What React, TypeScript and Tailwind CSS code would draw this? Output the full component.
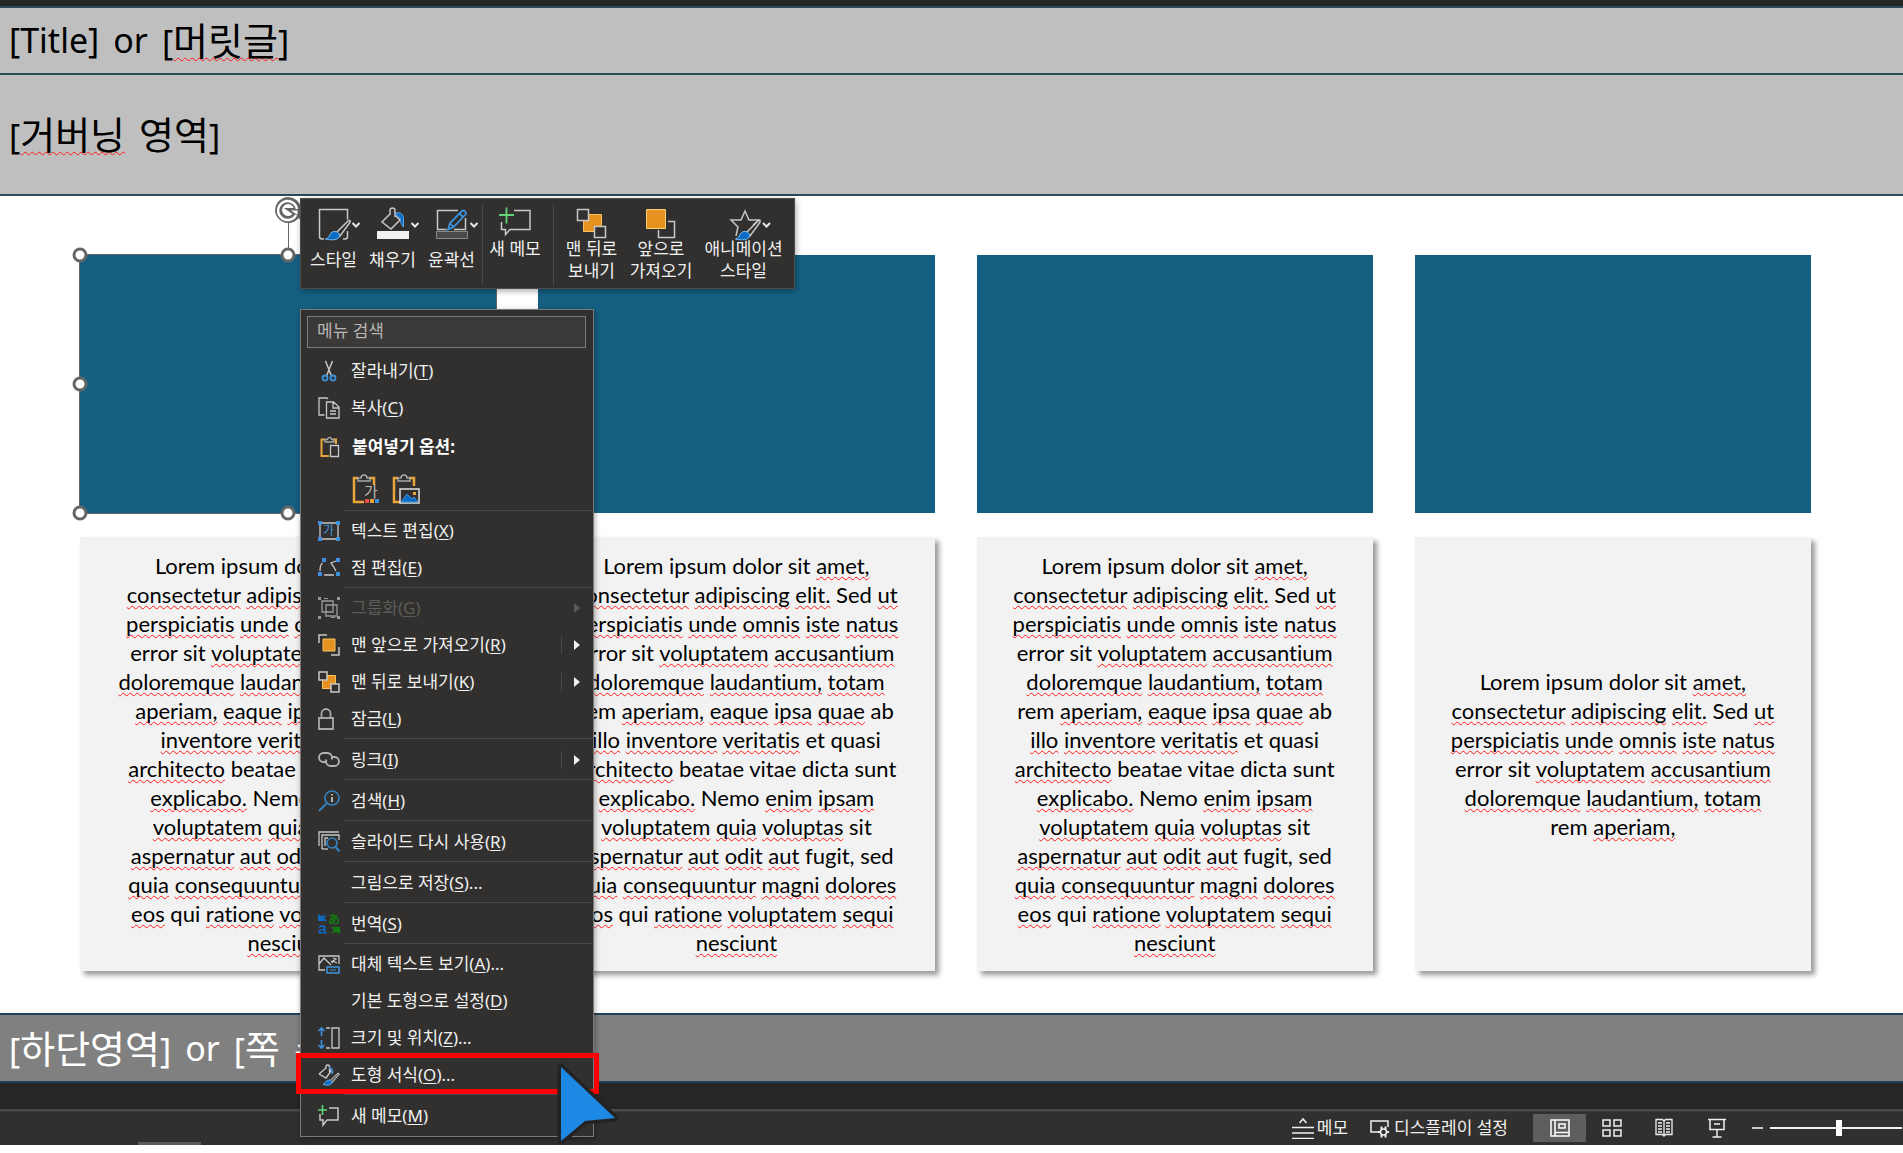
import React from 'react';

const SHAPE_COUNT = 4;

const FULL_LINES = [
  'Lorem ipsum dolor sit *amet,',
  '*consectetur *adipiscing *elit. Sed *ut',
  '*perspiciatis *unde *omnis *iste *natus',
  'error sit *voluptatem *accusantium',
  '*doloremque *laudantium, *totam',
  'rem *aperiam, *eaque *ipsa *quae ab',
  '*illo *inventore *veritatis et quasi',
  '*architecto beatae vitae dicta sunt',
  '*explicabo. Nemo *enim *ipsam',
  '*voluptatem *quia *voluptas sit',
  '*aspernatur *aut *odit *aut fugit, sed',
  '*quia *consequuntur *magni *dolores',
  '*eos qui *ratione *voluptatem *sequi',
  '*nesciunt',
];

const WIDE_LINES = [
  ...FULL_LINES.slice(0, 4),
  '*doloremque *laudantium, *totam rem',
  '*aperiam, *eaque *ipsa *quae ab *illo',
  '*inventore *veritatis et quasi',
  ...FULL_LINES.slice(7),
];

const CARDS = [WIDE_LINES, FULL_LINES, FULL_LINES, [...FULL_LINES.slice(0, 5), 'rem *aperiam,']];

const Misspelt: React.FC<{ children: React.ReactNode }> = ({ children }) => (
  <span className="underline decoration-wavy decoration-[#ff1a1a] decoration-1 underline-offset-2 [text-decoration-skip-ink:none]">
    {children}
  </span>
);

const TextCard: React.FC<{ lines: string[] }> = ({ lines }) => (
  <div className="flex flex-col justify-center bg-[#f2f2f2] py-[14px] text-center font-['Lato',sans-serif] text-[22px] leading-[29px] text-black shadow-[4px_4px_5px_rgba(0,0,0,0.4)] [font-variant-ligatures:none]">
    {lines.map((line, i) => (
      <p key={i} className="whitespace-nowrap">
        {line.split(' ').map((word, j) => (
          <React.Fragment key={j}>
            {j > 0 && ' '}
            {word.startsWith('*') ? <Misspelt>{word.slice(1)}</Misspelt> : word}
          </React.Fragment>
        ))}
      </p>
    ))}
  </div>
);

const Handle: React.FC<{ className: string }> = ({ className }) => (
  <span className={`absolute size-[15px] -translate-x-1/2 -translate-y-1/2 rounded-full border-[3px] border-[#666] bg-white ${className}`} />
);

const Selection: React.FC = () => (
  <div className="absolute -inset-px border border-[#666]">
    <span className="absolute -top-8 left-1/2 h-8 w-px bg-[#666]" />
    <svg viewBox="0 0 28 28" className="absolute -top-[59px] left-1/2 size-7 -translate-x-1/2" fill="none">
      <path d="M22.5 18.5a9.5 9.5 0 1 1 1-6" stroke="#666" strokeWidth="7" />
      <path d="M13 13h13v9z" fill="#666" stroke="#666" strokeWidth="2" />
      <path d="M22 19a9.5 9.5 0 1 1 1-6" stroke="#fff" strokeWidth="2.5" />
      <path d="M17 14.500h6.500v4.500z" fill="#fff" />
    </svg>
    <Handle className="left-0 top-0" />
    <Handle className="left-1/2 top-0" />
    <Handle className="left-0 top-1/2" />
    <Handle className="left-0 top-full" />
    <Handle className="left-1/2 top-full" />
  </div>
);

/* ---------- Mini toolbar ---------- */

const Chevron = <path d="M48.500 18l3.500 3.500L55.500 18" stroke="#e8e8e8" strokeWidth="2" />;

const Brush: React.FC<{ transform?: string }> = ({ transform }) => (
  <g transform={transform}>
    <path d="M44 16c2-1.500 3 0 1.500 2L36 31l-4-3z" fill="#31302e" stroke="#c8c8c8" strokeWidth="1.500" />
    <path d="M31 26.500c4 .5 6 4 3.500 6.500-3 2.500-9 2-13 1 3-1 3.500-2.500 4.500-4.500 1-2 3-3.500 5-3z" fill="#0a6cc4" stroke="#7dbcf0" strokeWidth="1" />
  </g>
);

const ToolSvg: React.FC<{ w: string; box: string; children: React.ReactNode }> = ({ w, box, children }) => (
  <svg viewBox={box} className={`h-[33px] overflow-visible ${w}`} fill="none" aria-hidden="true">
    {children}
  </svg>
);

const ToolButton: React.FC<{ width: string; icon: React.ReactNode; lines: string[]; low?: boolean }> = ({ width, icon, lines, low }) => (
  <button type="button" className={`flex flex-col items-center ${width}`}>
    {icon}
    <span className={`whitespace-nowrap leading-[22px] ${low ? 'mt-[11px]' : ''}`}>
      {lines.map((l) => (
        <span key={l} className="block">{l}</span>
      ))}
    </span>
  </button>
);

const MiniToolbar: React.FC = () => (
  <div
    role="toolbar"
    className="absolute left-[300px] top-[198px] flex h-[91px] border border-[#4e4c4a] bg-[#31302e] px-[3px] pt-[6px] text-[17px] text-[#f0f0f0] shadow-[1px_2px_6px_rgba(0,0,0,0.35)]"
  >
    <ToolButton
      width="w-[59px]"
      low
      lines={['스타일']}
      icon={
        <ToolSvg w="w-[59px]" box="0 0 59 33">
          <path d="M20 34h-2a2.500 2.500 0 0 1-2.500-2.500V4.500h28v10M43.500 26v5.500a2.500 2.500 0 0 1-2.500 2.500h-2" stroke="#c8c8c8" strokeWidth="1.500" />
          <Brush />
          {Chevron}
        </ToolSvg>
      }
    />
    <ToolButton
      width="w-[59px]"
      low
      lines={['채우기']}
      icon={
        <ToolSvg w="w-[59px]" box="0 0 59 33">
          <path d="M27 10V5.500a2.500 2.500 0 0 1 5 0V12M27 9l-8 8 9 7 9-9-5-5" stroke="#c8c8c8" strokeWidth="1.500" />
          <path d="M33 8c5-1 7.500 1.500 7.500 6v8c-3-3-3-6-3-8-1-3-3-3-4.500-3z" fill="#0a6cc4" stroke="#5aa8e8" />
          <path d="M14 26h32v8H14z" fill="#f2f2f2" />
          {Chevron}
        </ToolSvg>
      }
    />
    <ToolButton
      width="w-[59px]"
      low
      lines={['윤곽선']}
      icon={
        <ToolSvg w="w-[59px]" box="0 0 59 33">
          <path d="M36 5.500H15.500v19h9M43.500 13v11.500H32" stroke="#c8c8c8" strokeWidth="1.500" />
          <path d="M26 24.500l2-6.500L40 6c2-1.500 5 1.500 3.500 3.500L31.500 22l-5.500 2.500zM28 18l3.500 4M37.500 8.500l4 4" stroke="#3c92dc" strokeWidth="1.800" />
          <path d="M14.500 26.500h31v7h-31z" fill="#4a4a4a" stroke="#8a8a8a" />
          {Chevron}
        </ToolSvg>
      }
    />
    <span className="ml-px h-[80px] w-px bg-[#4a4a48]" />
    <ToolButton
      width="w-[70px] pr-[6px]"
      lines={['새 메모']}
      icon={
        <ToolSvg w="w-[65px]" box="0 0 65 33">
          <path d="M31 5.500h16v19H27l-4.500 5v-5h-4V17" stroke="#c8c8c8" strokeWidth="1.500" />
          <path d="M23.500 2.500v16M16 10h15" stroke="#5fd37a" strokeWidth="1.800" />
        </ToolSvg>
      }
    />
    <span className="mr-[3px] h-[80px] w-px bg-[#4a4a48]" />
    <ToolButton
      width="w-[69px]"
      lines={['맨 뒤로', '보내기']}
      icon={
        <ToolSvg w="w-[69px]" box="0 0 69 33">
          <path d="M26.500 9.500h18v17h-18z" fill="#e69220" stroke="#f7c264" />
          <path d="M20.500 4.500h11v11h-11zM37.500 21.500h11v11h-11z" fill="#31302e" stroke="#c8c8c8" strokeWidth="1.500" />
        </ToolSvg>
      }
    />
    <ToolButton
      width="w-[70px]"
      lines={['앞으로', '가져오기']}
      icon={
        <ToolSvg w="w-[70px]" box="0 0 70 33">
          <path d="M42 16.500h6.500v16h-16V25" stroke="#c8c8c8" strokeWidth="1.500" />
          <path d="M20.500 4.500h19v19h-19z" fill="#e69220" stroke="#f9cf7c" />
        </ToolSvg>
      }
    />
    <ToolButton
      width="w-[95px]"
      lines={['애니메이션', '스타일']}
      icon={
        <ToolSvg w="w-[95px]" box="0 0 95 33">
          <path d="M40 31l2-9-7-7h10l4-9 4 9h10l-6 5" stroke="#c8c8c8" strokeWidth="1.500" />
          <Brush transform="translate(18 0)" />
          <path d="M67 18l3.500 3.500L74 18" stroke="#e8e8e8" strokeWidth="2" />
        </ToolSvg>
      }
    />
  </div>
);

/* ---------- Context menu ---------- */

const ICONS: Record<string, React.ReactNode> = {
  cut: (
    <>
      <path d="M7.500 1l6 15M14.500 1l-6 15" stroke="#c8c8c8" strokeWidth="1.500" />
      <circle cx="7" cy="18" r="2.500" stroke="#3c92dc" strokeWidth="1.800" />
      <circle cx="15" cy="18" r="2.500" stroke="#3c92dc" strokeWidth="1.800" />
    </>
  ),
  copy: (
    <path d="M6.500 18H1V1h8l1 1M8.500 5h7l5.500 5v11H8.500zM15 5v6h6M12 14h6M12 17h6" stroke="#c8c8c8" strokeWidth="1.300" />
  ),
  paste: (
    <>
      <path d="M7 3.500H3.500V20H11M15 3.500h3V8" stroke="#e9a53c" strokeWidth="2" />
      <path d="M7 6V3.500h2.500a2 2 0 0 1 4 0H16V6z" stroke="#a8a8a8" strokeWidth="1.300" />
      <path d="M12.500 9.500h8v11h-8z" fill="#31302e" stroke="#c8c8c8" strokeWidth="1.300" />
    </>
  ),
  editText: (
    <>
      <path d="M2 3h18v16H2z" stroke="#c8c8c8" strokeWidth="1.300" />
      <path d="M0 1h4v4H0zM18 1h4v4h-4zM0 17h4v4H0zM18 17h4v4h-4z" fill="#3c92dc" />
      <text x="5" y="15" fontSize="12" fill="#3c92dc" fontFamily="Noto Sans CJK KR">가</text>
    </>
  ),
  editPoints: (
    <>
      <path d="M2 14c0-4 1-7 2.500-8M18 4l-5 2 2.500 3.500L18 14M6 18h10" stroke="#c8c8c8" strokeWidth="1.300" />
      <path d="M4 1h4v4H4zM18 1h4v4h-4zM0 15h4v4H0zM18 15h4v4h-4z" fill="#3c92dc" />
    </>
  ),
  group: (
    <>
      <path d="M4 4h11v11H4zM8 8h11v11H8z" stroke="#9a9a9a" strokeWidth="1.300" />
      <path d="M0 0h3v3H0zM19 0h3v3h-3zM0 19h3v3H0zM19 19h3v3h-3zM6 1h4v1H6zM13 20h4v1h-4z" fill="#9a9a9a" />
    </>
  ),
  front: (
    <>
      <path d="M1 9V1h8M21 13v8h-8" stroke="#c8c8c8" strokeWidth="1.500" />
      <path d="M5 5h12v12H5z" fill="#e69220" stroke="#f7c264" />
    </>
  ),
  back: (
    <>
      <path d="M4.500 4.500h13v13h-13z" fill="#e69220" stroke="#f7c264" />
      <path d="M1 1h8v8H1zM13 13h8v8h-8z" fill="#31302e" stroke="#c8c8c8" strokeWidth="1.500" />
    </>
  ),
  lock: <path d="M1 10h14v11H1zM3.500 10V5.500a4.500 4.500 0 0 1 9 0V10" stroke="#a8a8a8" strokeWidth="1.800" />,
  link: (
    <path d="M8 13H5.500a4.500 4.500 0 0 1 0-9h4a4.500 4.500 0 0 1 4 6.500M14 8h2.500a4.500 4.500 0 0 1 0 9h-4a4.500 4.500 0 0 1-4-6.500" stroke="#b4b4b4" strokeWidth="1.800" />
  ),
  search: (
    <>
      <circle cx="14" cy="8" r="7" stroke="#3584c4" strokeWidth="1.600" />
      <path d="M9 13l-8 8" stroke="#3584c4" strokeWidth="1.800" />
      <path d="M14 4v1.500M14 7v5" stroke="#e0e0e0" strokeWidth="1.500" />
    </>
  ),
  reuse: (
    <>
      <path d="M1 15V1h20M4 18V4h17v5M7 15V7h3" stroke="#c8c8c8" strokeWidth="1.300" />
      <path d="M4 18h6" stroke="#c8c8c8" strokeWidth="1.300" />
      <circle cx="14" cy="12" r="5" stroke="#3584c4" strokeWidth="1.600" />
      <path d="M17.500 16l4 4.500" stroke="#3584c4" strokeWidth="2" />
    </>
  ),
  translate: (
    <>
      <path d="M0 1l3 2 6-1-3 3 3 3H0z" fill="#0f6cbd" />
      <path d="M22 21l-3-2-6 1 3-3-3-3h9z" fill="#107c10" />
      <text x="0" y="21" fontSize="16" fontWeight="700" fill="#1464b4" fontFamily="Liberation Sans">a</text>
      <text x="10" y="11" fontSize="12" fontWeight="700" fill="#107c10" fontFamily="Noto Sans CJK JP">あ</text>
    </>
  ),
  altText: (
    <>
      <path d="M7 17H1V3h20v8M1 11l5-6 7 7M13 8l2 2M15 5l3 1-3 2 4 2" stroke="#c8c8c8" strokeWidth="1.300" />
      <path d="M9 14h12v6H9z" stroke="#3c92dc" strokeWidth="1.600" />
      <path d="M12 17h6" stroke="#3c92dc" />
    </>
  ),
  size: (
    <>
      <path d="M3.500 1v8M3.500 21v-8M.5 4l3-3 3 3M.5 18l3 3 3-3" stroke="#3c92dc" strokeWidth="1.600" />
      <path d="M14 1h7v20h-7zM8 1h4M8 21h4" stroke="#c8c8c8" strokeWidth="1.300" />
    </>
  ),
  format: (
    <>
      <path d="M1 10l7-6V2a2 2 0 0 1 3.500 0V8M11 5l2 2-5 7-7-4" stroke="#c8c8c8" strokeWidth="1.400" />
      <path d="M11 4c3 0 4 3 3 6" stroke="#3c92dc" strokeWidth="1.800" />
      <path d="M20 9l1.500 1L14 19l-2.500-2z" fill="#6a6a6a" stroke="#c8c8c8" />
      <path d="M11 16c3 0 4 3 1.500 4.500-2 1-5 .5-7.500 0 2-.5 2.500-4.500 6-4.500z" fill="#0a6cc4" stroke="#5aa8e8" />
    </>
  ),
  memo: (
    <>
      <path d="M11 3h9v12H9l-4 5v-5H2V9" stroke="#c8c8c8" strokeWidth="1.500" />
      <path d="M4.500 0v10M0 5h9" stroke="#5fd37a" strokeWidth="1.600" />
    </>
  ),
};

interface Item {
  label: string;
  accel: string;
  tail?: string;
  icon?: string;
  submenu?: boolean;
  split?: boolean;
  disabled?: boolean;
  highlighted?: boolean;
}

const SECTIONS: Item[][] = [
  [
    { label: '텍스트 편집', accel: 'X', icon: 'editText' },
    { label: '점 편집', accel: 'E', icon: 'editPoints' },
  ],
  [
    { label: '그룹화', accel: 'G', icon: 'group', submenu: true, disabled: true },
    { label: '맨 앞으로 가져오기', accel: 'R', icon: 'front', submenu: true, split: true },
    { label: '맨 뒤로 보내기', accel: 'K', icon: 'back', submenu: true, split: true },
    { label: '잠금', accel: 'L', icon: 'lock' },
  ],
  [{ label: '링크', accel: 'I', icon: 'link', submenu: true, split: true }],
  [{ label: '검색', accel: 'H', icon: 'search' }],
  [{ label: '슬라이드 다시 사용', accel: 'R', icon: 'reuse' }],
  [{ label: '그림으로 저장', accel: 'S', tail: '...' }],
  [{ label: '번역', accel: 'S', icon: 'translate' }],
  [
    { label: '대체 텍스트 보기', accel: 'A', tail: '...', icon: 'altText' },
    { label: '기본 도형으로 설정', accel: 'D' },
    { label: '크기 및 위치', accel: 'Z', tail: '...', icon: 'size' },
    { label: '도형 서식', accel: 'O', tail: '...', icon: 'format', highlighted: true },
  ],
  [{ label: '새 메모', accel: 'M', icon: 'memo' }],
];

const MenuIcon: React.FC<{ name?: string }> = ({ name }) => (
  <svg viewBox="0 0 22 22" className="size-[22px] shrink-0 overflow-visible" fill="none" aria-hidden="true">
    {name && ICONS[name]}
  </svg>
);

const Pointer: React.FC = () => (
  <svg viewBox="0 0 62 82" className="absolute left-[256px] top-[7px] z-10 h-[82px] w-[62px]" aria-hidden="true">
    <path d="M4 4v74l24-20 30-3z" fill="#1e88e5" stroke="#232323" strokeWidth="7" strokeLinejoin="round" />
    <path d="M4 4v74l24-20 30-3z" fill="#1e88e5" />
  </svg>
);

const MenuItem: React.FC<{ item: Item }> = ({ item }) => (
  <div className="relative">
    <button
      type="button"
      role="menuitem"
      disabled={item.disabled}
      className={`flex h-[37px] w-full items-center pl-[17px] pr-[13px] ${item.disabled ? 'text-[#5c5b59]' : 'text-[#f0f0f0]'}`}
    >
      <MenuIcon name={item.icon} />
      <span className="ml-[11px] flex-1 whitespace-nowrap text-left">
        {item.label}(<u className="underline-offset-2">{item.accel}</u>){item.tail}
      </span>
      {item.split && <span className="mr-[12px] h-[18px] w-px bg-[#4a4a48]" />}
      {item.submenu && (
        <svg viewBox="0 0 6 10" className="h-[10px] w-[6px]" fill="currentColor" aria-hidden="true">
          <path d="M0 0l6 5-6 5z" />
        </svg>
      )}
    </button>
    {item.highlighted && (
      <>
        <span className="pointer-events-none absolute -bottom-px -left-[5px] -right-[6px] -top-[3px] border-[5px] border-[#f00]" />
        <Pointer />
      </>
    )}
  </div>
);

const PasteIcon: React.FC<{ children: React.ReactNode }> = ({ children }) => (
  <svg viewBox="0 0 28 31" className="h-[31px] w-[28px]" fill="none" aria-hidden="true">
    <path d="M6 5H2v24h10M17 5h5v8" stroke="#e9a53c" strokeWidth="2.500" />
    <path d="M6 8V5h3a3 3 0 0 1 6 0h3v3z" stroke="#a8a8a8" strokeWidth="1.500" />
    {children}
  </svg>
);

const ContextMenu: React.FC = () => (
  <div
    role="menu"
    className="absolute left-[300px] top-[309px] w-[294px] border border-[#7c7a78] bg-[#31302e] pb-[2px] text-[17px] shadow-[1px_2px_6px_rgba(0,0,0,0.35)]"
  >
    <div className="pb-1 pl-[6px] pr-[7px] pt-[6px]">
      <input
        type="text"
        aria-label="메뉴 검색"
        placeholder="메뉴 검색"
        className="block h-8 w-full border border-[#7c7a78] bg-[#3b3a38] px-[9px] pb-1 placeholder:text-[#b8b6b4]"
      />
    </div>
    <MenuItem item={{ label: '잘라내기', accel: 'T', icon: 'cut' }} />
    <MenuItem item={{ label: '복사', accel: 'C', icon: 'copy' }} />
    <div className="flex h-[41px] items-center pl-[17px] font-bold text-white">
      <MenuIcon name="paste" />
      <span className="ml-[12px]">붙여넣기 옵션:</span>
    </div>
    <div className="flex h-[42px] items-center gap-3 pl-[51px]">
      <button type="button" aria-label="대상 테마 사용">
        <PasteIcon>
          <path d="M12 12h14v19H12z" fill="#31302e" />
          <text x="12" y="24" fontSize="15" fill="#b8b8b8" fontFamily="Noto Sans CJK KR">가</text>
          <path d="M13 26h4v4h-4z" fill="#e84a4a" />
          <path d="M18 26h4v4h-4z" fill="#e9a53c" />
          <path d="M23 26h4v4h-4z" fill="#3c92dc" />
        </PasteIcon>
      </button>
      <button type="button" aria-label="그림">
        <PasteIcon>
          <path d="M8 16h19v14H8z" fill="#31302e" stroke="#e0e0e0" strokeWidth="1.500" />
          <path d="M9 29l6-8 5 5 2-2 4 5z" fill="#0a6cc4" stroke="#3c92dc" />
          <path d="M21 19h3v3h-3z" fill="#e9a53c" />
        </PasteIcon>
      </button>
    </div>
    {SECTIONS.map((items, i) => (
      <div key={i}>
        <div className={`ml-[43px] mr-px pt-px ${items.length > 1 ? 'h-[3px]' : 'h-1'}`}>
          <div className="h-px bg-[#484745]" />
        </div>
        {items.map((item) => (
          <MenuItem key={item.label} item={item} />
        ))}
      </div>
    ))}
  </div>
);

/* ---------- Status bar ---------- */

const StatusBar: React.FC = () => (
  <footer className="relative flex h-[34px] items-center justify-end border-t border-[#3c3b39] bg-[#31302e] pb-[2px] text-[17px] text-[#f0f0f0]">
    <span className="absolute bottom-0 left-[138px] h-[3px] w-[63px] bg-[#5c5b59]" />
    <button type="button" className="mr-[22px] flex items-center gap-[3px]">
      <svg viewBox="0 0 22 22" className="size-[22px]" fill="none" stroke="#f0f0f0" strokeWidth="1.500">
        <path d="M7.500 6L11 2l3.500 4M0 10.500h22M0 16h22M0 21.500h22" />
      </svg>
      메모
    </button>
    <button type="button" className="mr-[25px] flex items-center gap-1">
      <svg viewBox="0 0 20 20" className="size-5" fill="none" stroke="#f0f0f0" strokeWidth="1.500">
        <path d="M8 14H1V3h17v6" />
        <circle cx="13.500" cy="14" r="3" />
        <path d="M11.500 8.500v3M15.500 8.500v3M11.500 16.500v3M15.500 16.500v3M8 14h2.500M16.500 14H19" strokeWidth="2" />
      </svg>
      디스플레이 설정
    </button>
    <button type="button" aria-label="기본" className="flex h-[28px] w-[53px] items-center justify-center bg-[#5f5e5c]">
      <svg viewBox="0 0 20 18" className="h-[18px] w-5" fill="none" stroke="#fff" strokeWidth="1.500">
        <path d="M1 1h18v16H1zM5 1v16M5 13.500h14M9 5h6v4H9z" />
      </svg>
    </button>
    <button type="button" aria-label="여러 슬라이드" className="flex w-[52px] justify-center">
      <svg viewBox="0 0 20 18" className="h-[18px] w-5" fill="none" stroke="#f0f0f0" strokeWidth="1.500">
        <path d="M1 1h7v6H1zM12 1h7v6h-7zM1 11h7v6H1zM12 11h7v6h-7z" />
      </svg>
    </button>
    <button type="button" aria-label="읽기용 보기" className="flex w-[52px] justify-center">
      <svg viewBox="0 0 18 20" className="h-5 w-[18px]" fill="none" stroke="#f0f0f0" strokeWidth="1.300">
        <path d="M9 3L7.500 1.500H1v15h6.500L9 18l1.500-1.500H17v-15h-6.500zM9 3v15M3 5h4M3 8h4M3 11h4M3 14h4M11 5h4M11 8h4M11 11h4M11 14h4" />
      </svg>
    </button>
    <button type="button" aria-label="슬라이드 쇼" className="flex w-[53px] justify-center">
      <svg viewBox="0 0 18 20" className="h-5 w-[18px]" fill="none" stroke="#f0f0f0" strokeWidth="1.500">
        <path d="M0 1.500h18M2 2v9.500h14V2M9 12v6.500M4.500 19h9M6 6h6" />
      </svg>
    </button>
    <button type="button" aria-label="축소" className="ml-[9px] mr-[7px] flex h-5 w-[11px] items-center">
      <span className="h-[2px] w-full bg-[#c8c8c8]" />
    </button>
    <input
      type="range"
      aria-label="확대/축소"
      defaultValue={52}
      className="mr-px h-[18px] w-[132px] appearance-none bg-[linear-gradient(#f0f0f0,#f0f0f0)] bg-[length:100%_2px] bg-center bg-no-repeat [&::-webkit-slider-thumb]:h-[16px] [&::-webkit-slider-thumb]:w-[6px] [&::-webkit-slider-thumb]:appearance-none [&::-webkit-slider-thumb]:bg-white"
    />
  </footer>
);

const App: React.FC = () => (
  <div className="relative flex min-h-screen flex-col overflow-hidden bg-white pb-2 font-['Noto_Sans','Noto_Sans_CJK_KR',sans-serif]">
    <div className="h-[6px] bg-[#262626]" />

    {/* Slide */}
    <header className="flex h-[69px] items-center gap-[14px] border-y-2 border-[#2b4a5a] bg-[#bfbfbf] px-[9px] text-[34px] text-black">
      <span>[Title]</span>
      <span>or</span>
      <span>
        [<Misspelt><span className="text-[38px]">머릿글</span></Misspelt>]
      </span>
    </header>
    <div className="flex h-[121px] items-center gap-[14px] border-b-2 border-[#2b4a5a] bg-[#bfbfbf] px-[9px] text-[34px] text-black">
      <span>
        [<Misspelt><span className="text-[38px]">거버닝</span></Misspelt>
      </span>
      <span>
        <span className="text-[38px]">영역</span>]
      </span>
    </div>

    <main className="grid flex-1 grid-cols-[416fr_396fr_396fr_396fr] grid-rows-[258px_auto] content-start gap-x-[42px] gap-y-6 pl-20 pr-[92px] pt-[59px]">
      {Array.from({ length: SHAPE_COUNT }, (_, i) => (
        <div key={i} className="relative bg-[#156082]">
          {i === 0 && <Selection />}
        </div>
      ))}
      {CARDS.map((lines, i) => (
        <TextCard key={i} lines={lines} />
      ))}
    </main>

    <div className="flex h-[70px] items-center gap-[14px] border-y-2 border-[#1f4255] bg-[#808080] px-[9px] text-[34px] text-white">
      <span>
        [<span className="text-[38px]">하단영역</span>]
      </span>
      <span>or</span>
      <span>
        [<span className="text-[38px]">쪽</span>
      </span>
      <span className="text-[38px]">수]</span>
    </div>
    <div className="h-[28px] border-b-2 border-[#4a4a4a] bg-[#262626]" />
    <StatusBar />

    <MiniToolbar />
    <ContextMenu />
  </div>
);

export default App;
